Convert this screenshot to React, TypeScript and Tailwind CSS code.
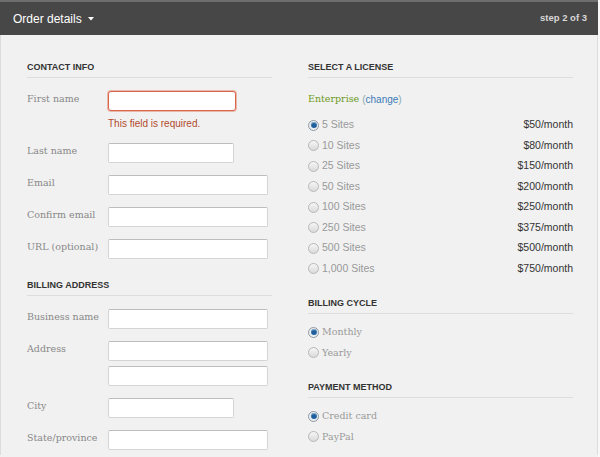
import React from 'react';

const serif = "font-['DejaVu_Serif','Liberation_Serif',serif]";

const licenses = [
  { sites: '5 Sites', price: '$50/month', checked: true },
  { sites: '10 Sites', price: '$80/month' },
  { sites: '25 Sites', price: '$150/month' },
  { sites: '50 Sites', price: '$200/month' },
  { sites: '100 Sites', price: '$250/month' },
  { sites: '250 Sites', price: '$375/month' },
  { sites: '500 Sites', price: '$500/month' },
  { sites: '1,000 Sites', price: '$750/month' },
];

const inputCls = 'block h-[20px] rounded-[2px] border border-[#d4d4d4] border-t-[#bdbdbd] bg-white outline-none';
const labelCls = `${serif} w-[81px] shrink-0 pt-[1px] text-[9.5px] leading-[14px] text-[#888]`;

const Radio: React.FC<{ checked?: boolean }> = ({ checked }) =>
  checked ? (
    <span className="flex h-[11px] w-[11px] shrink-0 items-center justify-center rounded-full border border-[#8f9aa5] bg-[#e9edf0]">
      <span className="h-[6px] w-[6px] rounded-full bg-[#1d5e9e] shadow-[inset_0_1px_1px_rgba(255,255,255,0.5)]" />
    </span>
  ) : (
    <span className="h-[11px] w-[11px] shrink-0 rounded-full border border-[#b8b8b8] bg-linear-to-b from-[#f6f6f6] to-[#dadada]" />
  );

const SectionTitle: React.FC<{ children: React.ReactNode; className?: string }> = ({ children, className = '' }) => (
  <h3 className={`border-b border-[#dedede] pb-[4px] text-[9px] font-bold uppercase leading-[12px] text-[#333] ${className}`}>
    {children}
  </h3>
);

const Field: React.FC<{ label: string; width?: string }> = ({ label, width = 'w-[160px]' }) => (
  <div className="mb-[12px] flex items-start">
    <label className={labelCls}>{label}</label>
    <input type="text" className={`${inputCls} ${width}`} />
  </div>
);

const RadioRow: React.FC<{ label: string; checked?: boolean; price?: string; serifLabel?: boolean }> = ({
  label,
  checked,
  price,
  serifLabel,
}) => (
  <div className="flex h-[20.5px] items-center">
    <Radio checked={checked} />
    <span className={`ml-[3px] ${serifLabel ? `${serif} text-[9.5px]` : 'text-[10.5px]'} text-[#999]`}>{label}</span>
    {price && <span className="ml-auto text-[10.5px] text-[#333]">{price}</span>}
  </div>
);

export default function App() {
  return (
    <div className="h-[457px] w-[600px] overflow-hidden bg-[#f8f8f8] font-['Liberation_Sans',Arial,sans-serif]">
      <div className="h-full w-[598px] bg-[#f1f1f1]">
        {/* header bar */}
        <div className="flex h-[35px] items-center justify-between border-t-2 border-[#6e6e6e] bg-[#474747] pl-[13px] pr-[11px]">
          <div className="flex items-center text-[12px] text-white">
            Order details
            <svg width="6" height="4" viewBox="0 0 6 4" className="ml-[6px] mt-[1px]">
              <path d="M0 0h6L3 3.5z" fill="#fff" />
            </svg>
          </div>
          <span className="text-[9.5px] font-bold text-[#d8d8d8]">step 2 of 3</span>
        </div>

        <div className="flex h-[420px] border-x border-[#dcdcdc] pl-[26px] pt-[26px]">
          {/* left column */}
          <div className="w-[245px]">
            <SectionTitle>Contact info</SectionTitle>
            <div className="mt-[13px]">
              <div className="flex items-start">
                <label className={labelCls}>First name</label>
                <div>
                  <input
                    type="text"
                    className="block h-[20px] w-[128px] rounded-[3px] border border-[#d9674c] bg-white shadow-[0_0_0_1px_rgba(226,128,100,0.5)] outline-none"
                  />
                  <p className="mb-[12px] mt-[6px] text-[10px] leading-[14px] text-[#b24a2c]">This field is required.</p>
                </div>
              </div>
              <Field label="Last name" width="w-[126px]" />
              <Field label="Email" />
              <Field label="Confirm email" />
              <Field label="URL (optional)" />
            </div>

            <SectionTitle className="mt-[20px]">Billing address</SectionTitle>
            <div className="mt-[13px]">
              <Field label="Business name" />
              <div className="mb-[12px] flex items-start">
                <label className={labelCls}>Address</label>
                <div className="flex flex-col gap-[5px]">
                  <input type="text" className={`${inputCls} w-[160px]`} />
                  <input type="text" className={`${inputCls} w-[160px]`} />
                </div>
              </div>
              <Field label="City" width="w-[126px]" />
              <Field label="State/province" />
            </div>
          </div>

          {/* right column */}
          <div className="ml-[36px] w-[265px]">
            <SectionTitle>Select a license</SectionTitle>
            <div className="mt-[13px] flex h-[16px] items-center">
              <span className={`${serif} text-[9.5px] text-[#6c9a22]`}>Enterprise</span>
              <span className="ml-[3px] text-[10px] text-[#8aa]">
                (<span className="text-[#3b7bb8]">change</span>)
              </span>
            </div>
            <div className="mt-[8px]">
              {licenses.map((l) => (
                <RadioRow key={l.sites} label={l.sites} price={l.price} checked={l.checked} />
              ))}
            </div>

            <SectionTitle className="mt-[18px]">Billing cycle</SectionTitle>
            <div className="mt-[8px]">
              <RadioRow label="Monthly" checked serifLabel />
              <RadioRow label="Yearly" serifLabel />
            </div>

            <SectionTitle className="mt-[18px]">Payment method</SectionTitle>
            <div className="mt-[8px]">
              <RadioRow label="Credit card" checked serifLabel />
              <RadioRow label="PayPal" serifLabel />
            </div>
          </div>
        </div>
      </div>
    </div>
  );
}
